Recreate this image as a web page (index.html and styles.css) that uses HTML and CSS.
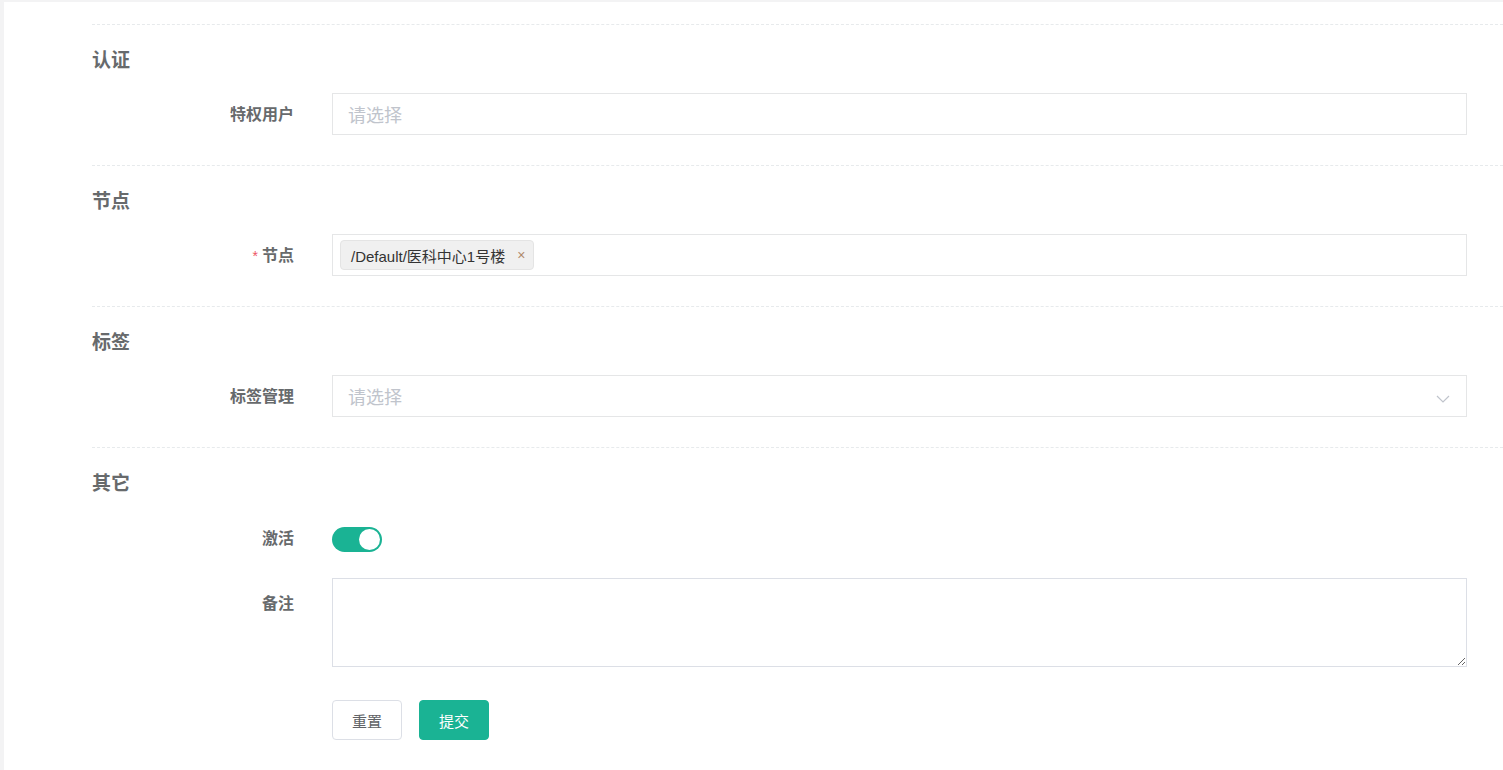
FILE: index.html
```html
<!DOCTYPE html>
<html lang="zh-CN">
<head>
<meta charset="utf-8">
<title>表单</title>
<link rel="stylesheet" href="styles.css">
</head>
<body>
<div class="panel">
  <section class="group">
    <h3 class="group-title">认证</h3>
    <div class="item">
      <label class="label">特权用户</label>
      <div class="control">
        <div class="input"><span class="placeholder">请选择</span></div>
      </div>
    </div>
  </section>
  <section class="group">
    <h3 class="group-title">节点</h3>
    <div class="item">
      <label class="label"><span class="req">*</span>节点</label>
      <div class="control">
        <div class="input tags">
          <span class="tag">/Default/医科中心1号楼<span class="tag-close">×</span></span>
        </div>
      </div>
    </div>
  </section>
  <section class="group">
    <h3 class="group-title">标签</h3>
    <div class="item">
      <label class="label">标签管理</label>
      <div class="control">
        <div class="input select"><span class="placeholder">请选择</span>
          <svg class="chev" width="14" height="8" viewBox="0 0 14 8"><path d="M1 1 L7 7 L13 1" fill="none" stroke="#c0c4cc" stroke-width="1.2"/></svg>
        </div>
      </div>
    </div>
  </section>
  <section class="group">
    <h3 class="group-title">其它</h3>
    <div class="item item-switch">
      <label class="label">激活</label>
      <div class="control">
        <span class="switch"><span class="knob"></span></span>
      </div>
    </div>
    <div class="item item-area">
      <label class="label">备注</label>
      <div class="control">
        <textarea class="area"></textarea>
      </div>
    </div>
    <div class="item item-btns">
      <div class="label"></div>
      <div class="control btns">
        <button class="btn">重置</button>
        <button class="btn btn-primary">提交</button>
      </div>
    </div>
  </section>
</div>
</body>
</html>
```
FILE: styles.css
```css
html, body {
  margin: 0;
  padding: 0;
}
body {
  background: #f3f3f4;
  font-family: "Liberation Sans", "Noto Sans CJK SC", sans-serif;
  color: #676a6c;
  overflow: hidden;
}
.panel {
  background: #fff;
  margin: 2px 0 0 4px;
  padding: 22px 0 40px 88px;
  min-height: 720px;
}
.group {
  border-top: 1px dashed #e7eaec;
}
.group-title {
  margin: 0;
  padding-top: 24px;
  margin-bottom: 20px;
  font-size: 19px;
  line-height: 24px;
  font-weight: bold;
  color: #676a6c;
}
.item {
  display: flex;
  align-items: flex-start;
  margin-bottom: 30px;
}
.label {
  width: 202px;
  height: 42px;
  padding-right: 38px;
  flex: none;
  text-align: right;
  font-size: 16px;
  font-weight: bold;
  line-height: 44px;
  color: #676a6c;
}
.req {
  color: #ed5565;
  font-weight: normal;
  font-size: 14px;
  margin-right: 4px;
}
.control {
  flex: 1;
  margin-right: 36px;
}
.input {
  height: 42px;
  box-sizing: border-box;
  border: 1px solid #e5e6e7;
  padding: 0 15px;
  display: flex;
  align-items: center;
  font-size: 18px;
}
.placeholder {
  color: #c0c4cc;
}
.tags {
  padding-left: 7px;
}
.tag {
  display: inline-flex;
  align-items: center;
  height: 30px;
  box-sizing: border-box;
  padding: 0 8px 0 10px;
  background: #f0f0f0;
  border: 1px solid #e4e4e4;
  border-radius: 4px;
  color: #333;
  font-size: 15px;
}
.tag-close {
  color: #b08a6a;
  font-size: 14px;
  margin-left: 12px;
}
.select {
  justify-content: space-between;
}
.chev {
  margin-right: 1px;
  margin-top: 6px;
}
.item-switch {
  margin-bottom: 16px;
}
.item-switch .label {
  height: 46px;
  line-height: 46px;
}
.item-switch .control {
  display: flex;
  align-items: center;
  height: 46px;
}
.switch {
  width: 50px;
  height: 25px;
  border-radius: 13px;
  background: #1ab394;
  position: relative;
  display: block;
}
.knob {
  position: absolute;
  right: 2px;
  top: 2px;
  width: 21px;
  height: 21px;
  border-radius: 50%;
  background: #fff;
}
.item-area {
  margin-bottom: 33px;
}
.item-area .label {
  padding-top: 4px;
  height: auto;
}
.area {
  display: block;
  width: 100%;
  height: 89px;
  box-sizing: border-box;
  border: 1px solid #dcdfe6;
  margin: 0;
  padding: 6px 15px;
  font-family: inherit;
  font-size: 14px;
  outline: none;
}
.item-btns {
  margin-bottom: 0;
}
.item-btns .label {
  height: 0;
}
.btns {
  display: flex;
  gap: 17px;
}
.btn {
  width: 70px;
  height: 40px;
  border: 1px solid #dcdfe6;
  border-radius: 4px;
  background: #fff;
  color: #606266;
  font-family: inherit;
  font-size: 15px;
  padding: 0;
  cursor: pointer;
}
.btn-primary {
  background: #1ab394;
  border-color: #1ab394;
  color: #fff;
}
```
